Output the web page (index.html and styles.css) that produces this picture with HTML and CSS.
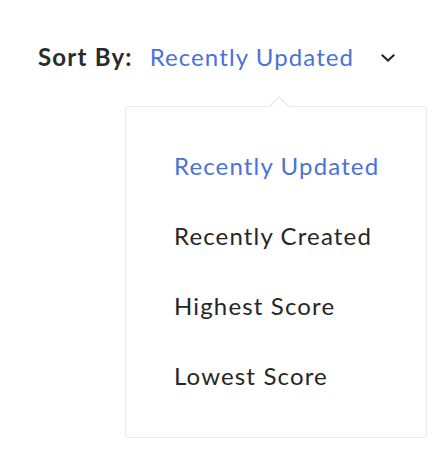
FILE: index.html
```html
<!DOCTYPE html>
<html>
<head>
<meta charset="utf-8">
<link rel="stylesheet" href="styles.css">
</head>
<body>
<div class="sort">
  <div class="bar">
    <span class="label">Sort By:</span>
    <span class="value">Recently Updated</span>
    <svg class="chev" width="14" height="8" viewBox="0 0 14 8"><path d="M1.5 1.5 L7 6.5 L12.5 1.5" fill="none" stroke="#2a2a2a" stroke-width="2.2" stroke-linecap="square"/></svg>
  </div>
  <div class="menu">
    <div class="item active">Recently Updated</div>
    <div class="item">Recently Created</div>
    <div class="item">Highest Score</div>
    <div class="item">Lowest Score</div>
  </div>
</div>
</body>
</html>
```
FILE: styles.css
```css
html, body { margin: 0; padding: 0; background: #fff; }
body { font-family: Lato, "Noto Sans", sans-serif; color: #262626; }
.sort { padding: 40px 0 0 38px; width: 390px; }
.bar { display: flex; align-items: center; height: 32px; }
.label { font-size: 24px; font-weight: 700; color: #2b2b2b; letter-spacing: 1.2px; }
.value { font-size: 24px; color: #4a72d9; margin-left: 17px; letter-spacing: 1.1px; }
.chev { margin-left: 27px; margin-top: 3px; }
.menu {
  position: relative;
  margin: 34px 0 0 87px;
  width: 302px;
  height: 332px;
  border: 1.5px solid #e9e9f1;
  border-radius: 4px;
  box-sizing: border-box;
  padding: 44px 0 0 48px;
  display: flex; flex-direction: column; gap: 0;
}
.menu::before, .menu::after {
  content: ""; position: absolute; left: 142px; width: 0; height: 0;
  border-left: 11px solid transparent; border-right: 11px solid transparent;
  border-bottom: 11px solid #e9e9f1;
  top: -11px;
}
.menu::after { border-bottom-color: #fff; top: -9px; left: 143px; border-left-width: 10px; border-right-width: 10px; border-bottom-width: 10px; }
.item { font-size: 24px; height: 70px; line-height: 30px; color: #262626; letter-spacing: 1.15px; }
.item.active { color: #4a72d9; }
```
